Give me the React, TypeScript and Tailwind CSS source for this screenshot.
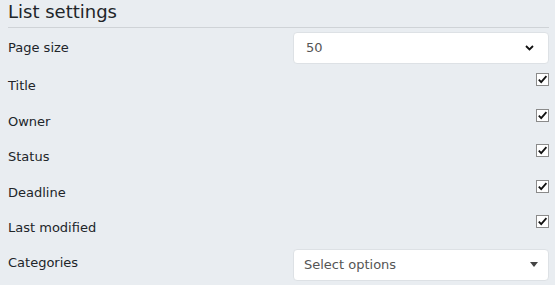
import React from "react";

const Check = () => (
  <svg width="13" height="13" viewBox="0 0 13 13" className="block">
    <rect x="0.5" y="0.5" width="12" height="12" fill="#ffffff" stroke="#8a8a8a" />
    <path d="M2.8 6.6 L5.2 9.2 L10.4 3.2" fill="none" stroke="#111" strokeWidth="1.8" />
  </svg>
);

export default function App() {
  const rows = ["Title", "Owner", "Status", "Deadline", "Last modified"];
  return (
    <div
      className="w-[555px] h-[285px] bg-[#e9edf1] text-[#212529] pl-2 pr-[6px] overflow-hidden"
      style={{ fontFamily: "'DejaVu Sans', Verdana, sans-serif" }}
    >
      <div className="h-[28px] border-b border-[#cfd3d7] flex items-end pb-[4px]">
        <h2 className="text-[18px] leading-[22px] font-normal">List settings</h2>
      </div>
      <div className="flex items-center justify-between mt-[4px] h-[32px]">
        <span className="text-[13px]">Page size</span>
        <div className="w-[256px] h-[32px] bg-white border border-[#dde1e5] rounded-[4px] flex items-center justify-between pl-[12px] pr-[14px]">
          <span className="text-[13px] text-[#555]">50</span>
          <svg width="9" height="6" viewBox="0 0 9 6">
            <path d="M1 1 L4.5 4.5 L8 1" fill="none" stroke="#111" strokeWidth="1.8" />
          </svg>
        </div>
      </div>
      <div className="mt-[4px]">
        {rows.map((r) => (
          <div key={r} className="h-[35.5px] flex items-start justify-between">
            <span className="text-[13px] leading-[18px] pt-[9px]">{r}</span>
            <div className="mt-[5px]">
              <Check />
            </div>
          </div>
        ))}
      </div>
      <div className="flex items-start justify-between">
        <span className="text-[13px] leading-[18px] pt-[8px]">Categories</span>
        <div className="mt-[3px] w-[256px] h-[32px] bg-white border border-[#dde1e5] rounded-[4px] flex items-center justify-between pl-[10px] pr-[10px]">
          <span className="text-[13px] text-[#555]">Select options</span>
          <svg width="8" height="5" viewBox="0 0 8 5">
            <path d="M0 0 L8 0 L4 5 Z" fill="#444" />
          </svg>
        </div>
      </div>
    </div>
  );
}
